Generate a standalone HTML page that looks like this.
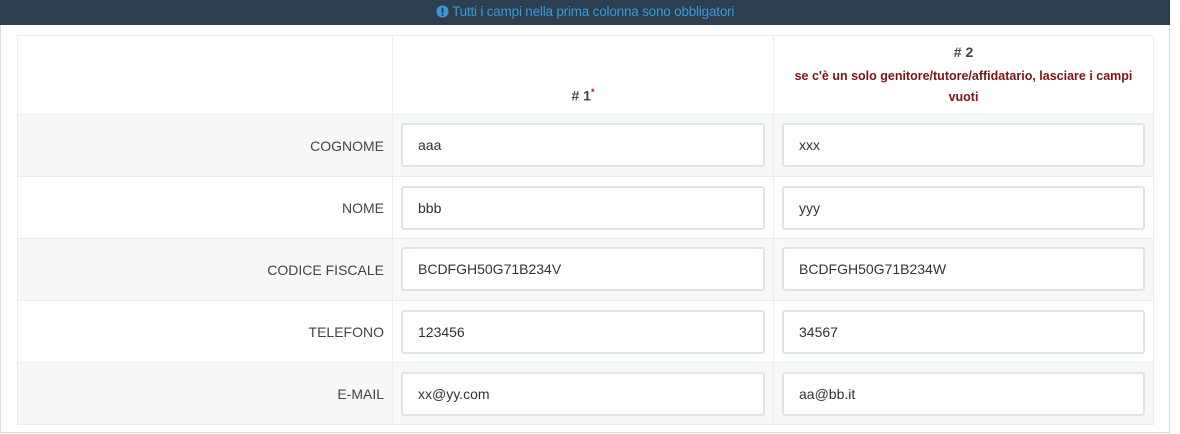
<!DOCTYPE html>
<html><head><meta charset="utf-8"><style>
*{box-sizing:border-box;margin:0;padding:0}
body{width:1180px;height:434px;background:#fff;font-family:"Liberation Sans",sans-serif;position:relative;overflow:hidden;color:#333}
.bar{position:absolute;left:0;top:0;width:1170px;height:25px;background:#2c3e50;text-align:center;color:#3a9ad9;font-size:13.5px;line-height:24px;letter-spacing:-0.2px}
.box{position:absolute;left:0;top:25px;width:1170px;height:408px;border:1px solid #ddd;border-top:none}
.cell{position:absolute;border:1px solid #e9eef0;}
.lab{position:absolute;right:0;font-size:14px;color:#444;text-align:right}
.inp{position:absolute;height:44px;border:2px solid #dde4ea;border-radius:3px;background:#fff;font-size:14px;line-height:40px;padding-left:15px;color:#333}
.g{background:#f8f8f8}
</style></head><body>
<div class="bar"><svg width="13" height="13" viewBox="0 0 14 14" style="vertical-align:-2px"><circle cx="7" cy="7" r="6.5" fill="#3a9ad9"/><rect x="6" y="3" width="2" height="5.5" fill="#2c3e50"/><rect x="6" y="9.5" width="2" height="2" fill="#2c3e50"/></svg> Tutti i campi nella prima colonna sono obbligatori</div>
<div class="box"></div>
<div class="cell" style="left:17px;top:35px;width:376px;height:80px"></div>
<div class="cell" style="left:392px;top:35px;width:382px;height:80px"><div style="position:absolute;left:0;right:0;top:51px;text-align:center;font-size:14px;font-weight:bold;color:#444">#&nbsp;1<sup style="color:#c00;font-size:9px">*</sup></div></div>
<div class="cell" style="left:773px;top:35px;width:381px;height:80px"><div style="position:absolute;left:0;right:0;top:8px;text-align:center;font-size:14px;font-weight:bold;color:#444">#&nbsp;2</div><div style="position:absolute;left:0;right:0;top:30px;text-align:center;font-size:12.5px;font-weight:bold;color:#7b1515;line-height:21px;white-space:nowrap">se c'è un solo genitore/tutore/affidatario, lasciare i campi<br>vuoti</div></div>

<div class="cell g" style="left:17px;top:114px;width:376px;height:63px"><div class="lab" style="right:8px;top:23px">COGNOME</div></div>
<div class="cell g" style="left:392px;top:114px;width:382px;height:63px"></div>
<div class="cell g" style="left:773px;top:114px;width:381px;height:63px"></div>
<div class="inp" style="left:401px;top:123px;width:364px">aaa</div>
<div class="inp" style="left:782px;top:123px;width:363px">xxx</div>

<div class="cell" style="left:17px;top:176px;width:376px;height:63px"><div class="lab" style="right:8px;top:23px">NOME</div></div>
<div class="cell" style="left:392px;top:176px;width:382px;height:63px"></div>
<div class="cell" style="left:773px;top:176px;width:381px;height:63px"></div>
<div class="inp" style="left:401px;top:186px;width:364px">bbb</div>
<div class="inp" style="left:782px;top:186px;width:363px">yyy</div>

<div class="cell g" style="left:17px;top:238px;width:376px;height:63px"><div class="lab" style="right:8px;top:23px">CODICE FISCALE</div></div>
<div class="cell g" style="left:392px;top:238px;width:382px;height:63px"></div>
<div class="cell g" style="left:773px;top:238px;width:381px;height:63px"></div>
<div class="inp" style="left:401px;top:247px;width:364px">BCDFGH50G71B234V</div>
<div class="inp" style="left:782px;top:247px;width:363px">BCDFGH50G71B234W</div>

<div class="cell" style="left:17px;top:300px;width:376px;height:63px"><div class="lab" style="right:8px;top:23px">TELEFONO</div></div>
<div class="cell" style="left:392px;top:300px;width:382px;height:63px"></div>
<div class="cell" style="left:773px;top:300px;width:381px;height:63px"></div>
<div class="inp" style="left:401px;top:310px;width:364px">123456</div>
<div class="inp" style="left:782px;top:310px;width:363px">34567</div>

<div class="cell g" style="left:17px;top:362px;width:376px;height:63px"><div class="lab" style="right:8px;top:23px">E-MAIL</div></div>
<div class="cell g" style="left:392px;top:362px;width:382px;height:63px"></div>
<div class="cell g" style="left:773px;top:362px;width:381px;height:63px"></div>
<div class="inp" style="left:401px;top:372px;width:364px">xx@yy.com</div>
<div class="inp" style="left:782px;top:372px;width:363px">aa@bb.it</div>
</body></html>
